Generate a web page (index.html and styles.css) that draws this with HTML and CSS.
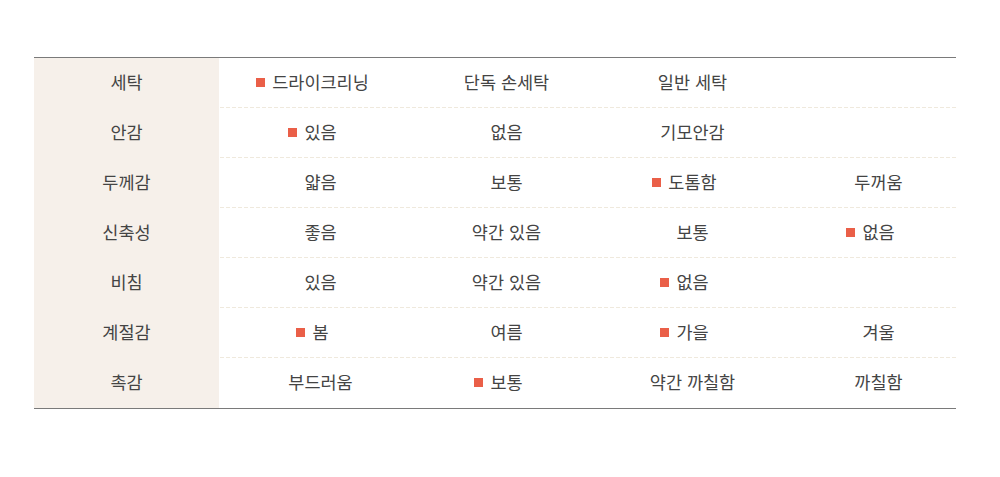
FILE: index.html
```html
<!DOCTYPE html>
<html lang="ko">
<head>
<meta charset="utf-8">
<title>소재 정보</title>
<link rel="stylesheet" href="styles.css">
</head>
<body>
<div class="page">
  <div class="spec">
    <div class="row">
      <div class="th">세탁</div>
      <div class="td"><span class="v on">드라이크리닝</span></div>
      <div class="td"><span class="v">단독 손세탁</span></div>
      <div class="td"><span class="v">일반 세탁</span></div>
      <div class="td last"></div>
    </div>
    <div class="row">
      <div class="th">안감</div>
      <div class="td"><span class="v on">있음</span></div>
      <div class="td"><span class="v">없음</span></div>
      <div class="td"><span class="v">기모안감</span></div>
      <div class="td last"></div>
    </div>
    <div class="row">
      <div class="th">두께감</div>
      <div class="td"><span class="v">얇음</span></div>
      <div class="td"><span class="v">보통</span></div>
      <div class="td"><span class="v on">도톰함</span></div>
      <div class="td last"><span class="v">두꺼움</span></div>
    </div>
    <div class="row">
      <div class="th">신축성</div>
      <div class="td"><span class="v">좋음</span></div>
      <div class="td"><span class="v">약간 있음</span></div>
      <div class="td"><span class="v">보통</span></div>
      <div class="td last"><span class="v on">없음</span></div>
    </div>
    <div class="row">
      <div class="th">비침</div>
      <div class="td"><span class="v">있음</span></div>
      <div class="td"><span class="v">약간 있음</span></div>
      <div class="td"><span class="v on">없음</span></div>
      <div class="td last"></div>
    </div>
    <div class="row">
      <div class="th">계절감</div>
      <div class="td"><span class="v on">봄</span></div>
      <div class="td"><span class="v">여름</span></div>
      <div class="td"><span class="v on">가을</span></div>
      <div class="td last"><span class="v">겨울</span></div>
    </div>
    <div class="row">
      <div class="th">촉감</div>
      <div class="td"><span class="v">부드러움</span></div>
      <div class="td"><span class="v on">보통</span></div>
      <div class="td"><span class="v">약간 까칠함</span></div>
      <div class="td last"><span class="v">까칠함</span></div>
    </div>
  </div>
</div>
</body>
</html>
```

FILE: styles.css
```css
html, body {
  margin: 0;
  padding: 0;
  background: #ffffff;
}

body {
  font-family: "Noto Sans CJK KR", "Noto Sans", sans-serif;
  font-size: 17.5px;
  color: #444444;
}

.page {
  padding: 57px 44px 0 34px;
}

.spec {
  width: 922px;
  border-top: 1px solid #7a7a7a;
  border-bottom: 1px solid #7a7a7a;
}

.row {
  display: grid;
  grid-template-columns: 185px 186px 186px 186px 179px;
  height: 50px;
}

.th {
  display: flex;
  align-items: center;
  justify-content: center;
  padding-bottom: 3px;
  background: #f6f0ea;
  line-height: 1;
}

.td {
  display: flex;
  align-items: center;
  justify-content: center;
  padding-left: 17px;
  padding-bottom: 3px;
  line-height: 1;
  background-image: linear-gradient(90deg, #efe9dd 4px, transparent 4px);
  background-size: 6px 1px;
  background-repeat: repeat-x;
  background-position: 1px 100%;
}

.td.last {
  padding-left: 24px;
}

.row:last-child .td {
  background-image: none;
}

.v {
  position: relative;
  white-space: nowrap;
}

.v.on::before {
  content: "";
  position: absolute;
  left: -16px;
  top: 50%;
  width: 9px;
  height: 9px;
  margin-top: -4px;
  background: #ea5f48;
}
```
